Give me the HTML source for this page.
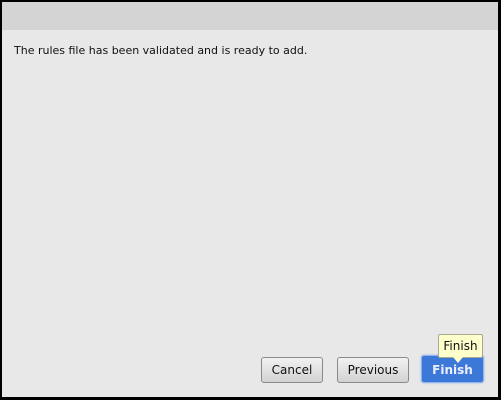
<!DOCTYPE html>
<html><head><style>
*{margin:0;padding:0;box-sizing:border-box}
body{width:501px;height:400px;background:#000;position:relative;overflow:hidden;font-family:"DejaVu Sans","Liberation Sans",sans-serif}
#win{position:absolute;left:2px;top:2px;width:496px;height:395px;background:#e8e8e8}
#bar{position:absolute;left:0;top:0;width:100%;height:28px;background:#d4d4d4}
#msg{position:absolute;left:12px;top:42px;font-size:11px;color:#111}
.btn{position:absolute;top:355px;height:26px;border:1px solid #8a8a8a;border-radius:3px;background:linear-gradient(#f2f2f2,#d2d2d2);font-size:12px;color:#111;text-align:center;line-height:24px}
#fin{position:absolute;left:419px;top:353px;width:63px;height:28px;border-radius:3px;background:#3c78d8;border:1px solid #8fb4ee;box-shadow:0 0 2px #9ab8ea;color:#eef;font-weight:bold;font-size:12px;text-align:center;line-height:28px}
#tip{position:absolute;left:436px;top:332px;width:45px;height:24px;background:#ffffcc;border:1px solid #a8a890;border-radius:2px;font-size:12px;line-height:22px;text-align:center;color:#111}
#arr{position:absolute;left:451px;top:355px;width:0;height:0;border-left:5px solid transparent;border-right:5px solid transparent;border-top:6px solid #ffffcc}
</style></head><body>
<div id="win">
<div id="bar"></div>
<div id="msg">The rules file has been validated and is ready to add.</div>
<div class="btn" style="left:259px;width:62px">Cancel</div>
<div class="btn" style="left:335px;width:72px">Previous</div>
<div id="fin">Finish</div>
<div id="tip">Finish</div>
<div id="arr"></div>
</div>
</body></html>
